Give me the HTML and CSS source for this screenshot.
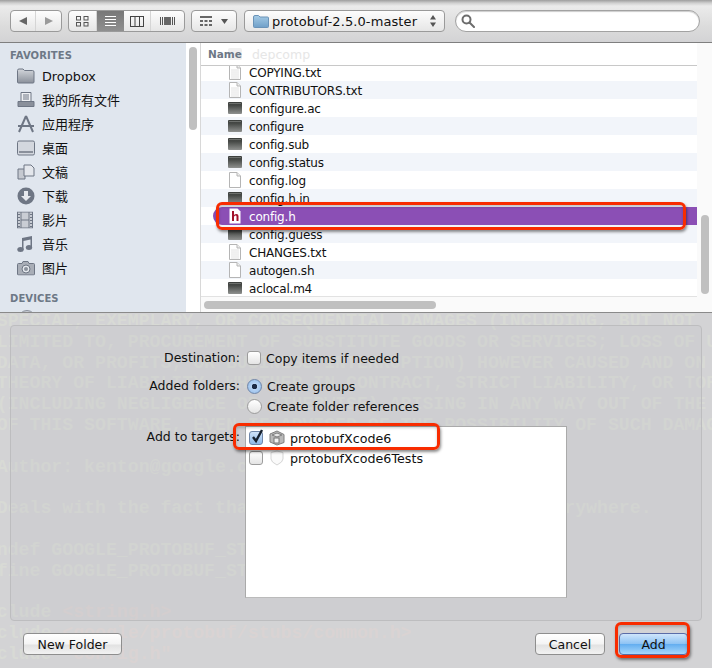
FILE: index.html
```html
<!DOCTYPE html>
<html lang="en">
<head>
<meta charset="utf-8">
<title>Add files</title>
<link rel="stylesheet" href="styles.css">
</head>
<body>
<svg class="defs" width="0" height="0" aria-hidden="true">
  <defs>
    <linearGradient id="termfill" x1="0" y1="0" x2="0" y2="1"><stop offset="0" stop-color="#3c3f3c"/><stop offset=".3" stop-color="#474a47"/><stop offset="1" stop-color="#8f918f"/></linearGradient>
    <linearGradient id="fold" x1="0" y1="0" x2="0" y2="1"><stop offset="0" stop-color="#a5cbe6"/><stop offset="1" stop-color="#6f9fc8"/></linearGradient>
    <linearGradient id="gfold" x1="0" y1="0" x2="0" y2="1"><stop offset="0" stop-color="#d3d6db"/><stop offset="1" stop-color="#8b919b"/></linearGradient>
    <symbol id="doc" viewBox="0 0 14 16"><path d="M1.500 .5h7.500l3.500 3.500v11.500h-11z" fill="#fff" stroke="#b5b5b5"/><path d="M9 .5v3.500h3.500" fill="#eee" stroke="#b5b5b5"/></symbol>
    <symbol id="doct" viewBox="0 0 14 16"><path d="M1.500 .5h7.500l3.500 3.500v11.500h-11z" fill="#fff" stroke="#b5b5b5"/><path d="M9 .5v3.500h3.500" fill="#eee" stroke="#b5b5b5"/><path d="M3 6h8M3 8h8M3 10h8M3 12h8M3 14h8" stroke="#e2e2e2"/></symbol>
    <symbol id="term" viewBox="0 0 14 12"><rect width="14" height="12" rx="1" fill="url(#termfill)"/><rect x="1" y="1" width="12" height="1" fill="#6d706d"/></symbol>
  </defs>
</svg>
<div class="sheet">
  <header class="toolbar">
    <div class="seg nav">
      <span class="cell"><svg width="10" height="10" viewBox="0 0 10 10"><path d="M9 1v8L1 5z" fill="#666"/></svg></span>
      <span class="cell"><svg width="10" height="10" viewBox="0 0 10 10"><path d="M1 1v8l8-4z" fill="#9a9a9a"/></svg></span>
    </div>
    <div class="seg views">
      <span class="cell"><svg width="13" height="11" viewBox="0 0 13 11" fill="none" stroke="#555"><rect x=".5" y=".5" width="4" height="3.500"/><rect x="8" y=".5" width="4" height="3.500"/><rect x=".5" y="6.500" width="4" height="3.500"/><rect x="8" y="6.500" width="4" height="3.500"/></svg></span>
      <span class="cell on"><svg width="13" height="11" viewBox="0 0 13 11" stroke="#fff"><path d="M1 .5h11M1 3.500h11M1 6.500h11M1 9.500h11"/></svg></span>
      <span class="cell"><svg width="14" height="11" viewBox="0 0 14 11" fill="none" stroke="#444"><rect x=".5" y=".5" width="13" height="10"/><path d="M5 .5v10M9.500 .5v10"/></svg></span>
      <span class="cell"><svg width="15" height="10" viewBox="0 0 15 10"><path d="M.5 1v8M2.500 1v8M12.500 1v8M14.500 1v8" stroke="#555"/><rect x="4" y="1" width="7" height="8" fill="#666"/></svg></span>
    </div>
    <div class="seg arrange">
      <svg width="12" height="10" viewBox="0 0 12 10" fill="#666"><path d="M0 0h12v2H0zM0 4h3v2H0zM4.500 4h3v2h-3zM9 4h3v2H9zM0 8h3v2H0zM4.500 8h3v2h-3zM9 8h3v2H9z"/></svg>
      <svg width="7" height="5" viewBox="0 0 7 5"><path d="M0 0h7L3.500 5z" fill="#555"/></svg>
    </div>
    <div class="seg path">
      <svg width="16" height="13" viewBox="0 0 16 13"><path d="M.5 2q0-1.500 1.500-1.500h3.500l1.500 1.500h7.500q1 0 1 1v8.500q0 1-1 1h-13q-1 0-1-1z" fill="url(#fold)" stroke="#6a93b8"/></svg>
      <span class="path-name">protobuf-2.5.0-master</span>
      <svg width="6" height="12" viewBox="0 0 6 12"><path d="M3 0l3 4.500H0zM3 12L0 7.500h6z" fill="#555"/></svg>
    </div>
    <div class="search">
      <svg width="14" height="14" viewBox="0 0 14 14" fill="none" stroke="#6c6c6c" stroke-width="2"><circle cx="5.500" cy="5.500" r="4"/><path d="M8.500 8.500l4.500 4.500" stroke-linecap="round"/></svg>
    </div>
  </header>

  <section class="browser">
    <nav class="sidebar">
      <h2 class="side-head">FAVORITES</h2>
      <a class="side-item"><svg width="18" height="16" viewBox="0 0 18 16"><path d="M.5 2.500q0-1.500 1.500-1.500h4l1.500 1.500h8q1.500 0 1.500 1.500v10q0 1-1 1h-14.500q-1 0-1-1z" fill="url(#gfold)" stroke="#6e7684"/></svg>Dropbox</a>
      <a class="side-item"><svg width="18" height="16" viewBox="0 0 18 16"><path d="M4 .5h10v9H4zM6 3h6M6 5h6M6 7h6" fill="#eef0f3" stroke="#6e7684"/><path d="M1 9.500h16v5H1z" fill="#8a909b" stroke="#6e7684"/></svg><span class="cjk">我的所有文件</span></a>
      <a class="side-item"><svg width="18" height="18" viewBox="0 0 18 18" fill="none" stroke="#6e7684" stroke-width="2"><path d="M9 1L2 17M9 1l7 16M1 11h16"/></svg><span class="cjk">应用程序</span></a>
      <a class="side-item"><svg width="18" height="16" viewBox="0 0 18 16"><rect x=".5" y="1" width="17" height="14" rx="1.500" fill="#d3d7de" stroke="#6e7684"/><rect x="2" y="11" width="14" height="2" fill="#8a909b"/></svg><span class="cjk">桌面</span></a>
      <a class="side-item"><svg width="18" height="16" viewBox="0 0 18 16"><path d="M1 5h7v10H1z" fill="#c5c9d0" stroke="#6e7684"/><path d="M7 1h7l3 3v8H7z" fill="#e4e7ec" stroke="#6e7684"/></svg><span class="cjk">文稿</span></a>
      <a class="side-item"><svg width="18" height="18" viewBox="0 0 18 18"><circle cx="9" cy="9" r="8.500" fill="#6e7684"/><path d="M7 4h4v5h3l-5 5-5-5h3z" fill="#e6e9ee"/></svg><span class="cjk">下载</span></a>
      <a class="side-item"><svg width="16" height="17" viewBox="0 0 16 17"><rect x=".5" y=".5" width="15" height="16" fill="#c9cdd4" stroke="#6e7684"/><path d="M4 .5v16M12 .5v16M4 8.500h8" stroke="#6e7684"/><path d="M1 3h2M1 6h2M1 9h2M1 12h2M1 15h2M13 3h2M13 6h2M13 9h2M13 12h2M13 15h2" stroke="#6e7684"/></svg><span class="cjk">影片</span></a>
      <a class="side-item"><svg width="16" height="16" viewBox="0 0 16 16" fill="#6e7684"><path d="M5 2l10-2v11h-1.500V3.500L6.500 5v9H5z"/><ellipse cx="3.500" cy="13.500" rx="3.200" ry="2.500"/><ellipse cx="12" cy="11.500" rx="3.200" ry="2.500"/></svg><span class="cjk">音乐</span></a>
      <a class="side-item"><svg width="18" height="15" viewBox="0 0 18 15"><path d="M1.500 3H5l1-2h5l1 2h4.500q1 0 1 1v9.500q0 1-1 1h-15q-1 0-1-1V4q0-1 1-1z" fill="#a9aeb7" stroke="#6e7684"/><circle cx="9" cy="8.500" r="4" fill="#e4e7ec" stroke="#6e7684"/><circle cx="9" cy="8.500" r="2" fill="#8a909b"/></svg><span class="cjk">图片</span></a>
      <h2 class="side-head devices">DEVICES</h2>
      <svg class="side-peek" width="18" height="4" viewBox="0 0 18 4"><circle cx="9" cy="9" r="8.500" fill="#c9cdd4" stroke="#8a909b"/></svg>
    </nav>
    <div class="side-scroll"><span class="thumb-v"></span></div>
    <div class="files">
      <div class="list-head"><b>Name</b><span class="ghost-name">depcomp</span></div>
      <ul class="rows">
        <li class="row first"><svg class="ic" width="14" height="16"><use href="#doct"/></svg>COPYING.txt</li>
        <li class="row"><svg class="ic" width="14" height="16"><use href="#doct"/></svg>CONTRIBUTORS.txt</li>
        <li class="row"><svg class="ic" width="14" height="12"><use href="#term"/></svg>configure.ac</li>
        <li class="row"><svg class="ic" width="14" height="12"><use href="#term"/></svg>configure</li>
        <li class="row"><svg class="ic" width="14" height="12"><use href="#term"/></svg>config.sub</li>
        <li class="row"><svg class="ic" width="14" height="12"><use href="#term"/></svg>config.status</li>
        <li class="row"><svg class="ic" width="14" height="16"><use href="#doc"/></svg>config.log</li>
        <li class="row"><svg class="ic" width="14" height="12"><use href="#term"/></svg>config.h.in</li>
        <li class="row selected"><svg class="ic" width="14" height="16" viewBox="0 0 14 16"><path d="M1.500 .5h8l3 3v12h-11z" fill="#fff"/><path d="M4 3h2v4q1-1 2.500-1 2 0 2 2v5H8.500V8.500q0-1-1-1-1.500 0-1.500 1.500v4H4z" fill="#a2132a"/></svg>config.h</li>
        <li class="row"><svg class="ic" width="14" height="12"><use href="#term"/></svg>config.guess</li>
        <li class="row"><svg class="ic" width="14" height="16"><use href="#doct"/></svg>CHANGES.txt</li>
        <li class="row"><svg class="ic" width="14" height="16"><use href="#doc"/></svg>autogen.sh</li>
        <li class="row"><svg class="ic" width="14" height="12"><use href="#term"/></svg>aclocal.m4</li>
      </ul>
      <div class="h-scroll"><span class="thumb-h"></span></div>
    </div>
    <div class="file-scroll"><span class="thumb-f"></span></div>
  </section>

  <section class="lower">
<pre class="ghost">// SPECIAL, EXEMPLARY, OR CONSEQUENTIAL DAMAGES (INCLUDING, BUT NOT
// LIMITED TO, PROCUREMENT OF SUBSTITUTE GOODS OR SERVICES; LOSS OF USE,
// DATA, OR PROFITS; OR BUSINESS INTERRUPTION) HOWEVER CAUSED AND ON ANY
// THEORY OF LIABILITY, WHETHER IN CONTRACT, STRICT LIABILITY, OR TORT
// (INCLUDING NEGLIGENCE OR OTHERWISE) ARISING IN ANY WAY OUT OF THE USE
// OF THIS SOFTWARE, EVEN IF ADVISED OF THE POSSIBILITY OF SUCH DAMAGE.

// Author: kenton@google.com (Kenton Varda)

// Deals with the fact that hash_map is not defined everywhere.

#ifndef GOOGLE_PROTOBUF_STUBS_HASH_H__
#define GOOGLE_PROTOBUF_STUBS_HASH_H__

#include <span class="inc">&lt;string.h&gt;</span>
#include <span class="inc">&lt;google/protobuf/stubs/common.h&gt;</span>
#include <span class="inc">"config.h"</span></pre>
    <div class="options">
      <div class="form">
        <span class="label">Destination:</span>
        <label class="opt"><span class="check"></span>Copy items if needed</label>
        <span class="label gap-top">Added folders:</span>
        <div class="radios">
          <label class="opt"><span class="radio on"></span>Create groups</label>
          <label class="opt"><span class="radio"></span>Create folder references</label>
        </div>
        <span class="label targets-label">Add to targets:</span>
        <div class="targets">
          <div class="target"><span class="check on"><svg width="14" height="15" viewBox="0 0 14 15"><path d="M3 8l3 4 6-11" fill="none" stroke="#16202e" stroke-width="2.400"/></svg></span>
            <svg class="t-ic" width="16" height="16" viewBox="0 0 16 16"><path d="M8 1l7 3.500v8L8 15l-7-3v-8z" fill="#b9b9b9" stroke="#808080"/><path d="M3 5l5-2 5 2-5 2z" fill="#e8e8e8" stroke="#808080"/><rect x="5" y="8" width="5" height="5" fill="#f3f3f3" stroke="#777"/></svg>
            protobufXcode6</div>
          <div class="target"><span class="check"></span>
            <svg class="t-ic" width="16" height="16" viewBox="0 0 16 16"><path d="M2 2.500L8 1l6 1.500V9q0 3-6 6-6-3-6-6z" fill="#fafafa" stroke="#d5d5d5"/></svg>
            protobufXcode6Tests</div>
        </div>
      </div>
    </div>
    <footer class="actions">
      <button class="btn folder">New Folder</button>
      <span class="spacer"></span>
      <button class="btn cancel">Cancel</button>
      <button class="btn add">Add</button>
    </footer>
  </section>
</div>
<div class="mark mark-file"></div>
<div class="mark mark-target"></div>
<div class="mark mark-add"></div>
</body>
</html>
```

FILE: styles.css
```css
* { box-sizing: border-box; }
html, body { margin: 0; padding: 0; }
body {
  width: 712px;
  height: 668px;
  overflow: hidden;
  position: relative;
  font-family: "DejaVu Sans", "Noto Sans CJK SC", sans-serif;
  font-size: 12px;
  color: #111;
  background: #d2d2d4;
}
.defs { position: absolute; }
.sheet { display: flex; flex-direction: column; height: 668px; }

/* toolbar */
.toolbar {
  height: 43px;
  flex: none;
  display: flex;
  align-items: flex-start;
  padding: 10px 12px 0 10px;
  background: linear-gradient(#9d9d9d 0, #cfcfcf 3px, #ebebeb 6px, #dcdcdc 26px, #d3d3d5 100%);
  border-bottom: 1px solid #7f7f7f;
}
.seg {
  height: 22px;
  border: 1px solid #9a9a9a;
  border-radius: 4px;
  background: linear-gradient(#fdfdfd, #e6e6e6);
  display: flex;
  align-items: center;
  margin-right: 6px;
  overflow: hidden;
}
.cell {
  height: 100%;
  display: flex;
  align-items: center;
  justify-content: center;
  border-right: 1px solid #d5d5d5;
}
.cell:last-child { border-right: 0; }
.nav { width: 52px; }
.nav .cell { flex: 1; }
.views { width: 118px; }
.views .cell { width: 27px; flex: none; }
.views .cell:first-child { width: 28px; }
.views .cell:last-child { width: auto; flex: 1; }
.views .cell.on { background: linear-gradient(#787878, #8f8f8f); border-right: 0; }
.arrange { width: 46px; justify-content: center; gap: 9px; margin-right: 6px; }
.path { width: 202px; padding: 0 8px 0 8px; margin-left: 1px; margin-right: 10px; gap: 3px; }
.path-name { flex: 1; font-size: 13px; white-space: nowrap; letter-spacing: .1px; }
.search {
  width: 246px;
  height: 22px;
  border: 1px solid #a2a2a2;
  border-radius: 11px;
  background: #fff;
  display: flex;
  align-items: center;
  padding-left: 5px;
  box-shadow: inset 0 1px 1px #ccc;
}

/* browser */
.browser { height: 269px; flex: none; display: flex; background: #fff; }
.sidebar {
  width: 186px;
  flex: none;
  background: #e0e6ee;
  overflow: hidden;
  padding: 0 0 0 10px;
}
.side-head {
  margin: 5px 0 0;
  height: 16px;
  line-height: 16px;
  font-size: 10px;
  font-weight: bold;
  color: #6d7886;
  letter-spacing: .1px;
}
.side-head.devices { margin-top: 11px; }
.side-peek { display: block; margin: 3px 0 0 8px; }
.side-item {
  height: 24px;
  display: flex;
  align-items: center;
  position: relative;
  padding-left: 32px;
  font-size: 12.800px;
}
.side-item svg { position: absolute; left: 7px; top: 50%; transform: translateY(-50%); }
.cjk { font-family: "Noto Sans CJK SC", sans-serif; font-size: 13px; margin-bottom: 2px; }
.side-scroll { width: 14px; flex: none; background: #fff; padding: 4px 0 0 3px; }
.thumb-v { display: block; width: 8px; height: 83px; border-radius: 4px; background: #c0c0c0; }
.files { width: 497px; flex: none; display: flex; flex-direction: column; border-left: 1px solid #d8d8d8; }
.list-head {
  height: 23px;
  flex: none;
  display: flex;
  align-items: center;
  padding-left: 7px;
  border-bottom: 1px solid #c8c8c8;
  background: #fff;
  position: relative;
  z-index: 1;
}
.list-head::before {
  content: "";
  position: absolute;
  left: 27px;
  top: 5px;
  width: 14px;
  height: 12px;
  border-radius: 2px;
  background: #f0f0f0;
  z-index: -1;
}
.list-head b { font-size: 10.500px; color: #6d7886; }
.ghost-name { margin-left: 10px; color: #e6e6e6; font-size: 12.500px; }
.rows {
  list-style: none;
  margin: 0;
  padding: 0;
  height: 231px;
  flex: none;
  overflow: hidden;
  border-bottom: 1px solid #e2e2e2;
}
.row {
  height: 18px;
  display: flex;
  align-items: center;
  padding: 2px 0 0 27px;
  position: relative;
  font-size: 12px;
  letter-spacing: -.2px;
  white-space: nowrap;
}
.row:nth-child(even) { background: #f2f5fa; }
.row.first { margin-top: -3px; }
.ic { margin: -2px 7px 0 0; flex: none; }
.row.selected {
  margin-left: 12px;
  padding-left: 15px;
  background: #8b4fb5;
  color: #fff;
  border-radius: 9px 0 0 9px;
}
.h-scroll { height: 15px; flex: none; padding: 4px 0 0 3px; background: #fafafa; }
.thumb-h { display: block; width: 232px; height: 8px; border-radius: 4px; background: #c0c0c0; }
.file-scroll { flex: 1; background: #fafafa; padding: 172px 0 0 4px; }
.thumb-f { display: block; width: 8px; height: 79px; border-radius: 4px; background: #c0c0c0; }

/* lower pane */
.lower {
  position: relative;
  flex: 1;
  overflow: hidden;
  border-top: 1px solid #8a8a8a;
  background: #d3d3d5;
  display: flex;
  flex-direction: column;
}
.ghost {
  position: absolute;
  left: -36px;
  top: -2px;
  margin: 0;
  font-family: "Liberation Mono", monospace;
  font-weight: bold;
  font-size: 18.200px;
  line-height: 20.800px;
  color: #d8dad5;
  white-space: pre;
}
.inc { color: #dad3d3; }
.options {
  position: relative;
  margin: 12px 10px 0 10px;
  height: 296px;
  flex: none;
  border: 1px solid #bdbdbf;
  border-radius: 4px;
  background: rgba(190, 190, 194, .22);
}
.form {
  display: grid;
  grid-template-columns: 229px 1fr;
  column-gap: 5px;
  padding-top: 24px;
}
.label { text-align: right; line-height: 16px; font-size: 12.500px; }
.gap-top { margin-top: 12px; }
.opt {
  display: flex;
  align-items: center;
  height: 16px;
  font-size: 12.500px;
  gap: 5px;
  margin-left: 2px;
}
.radios { display: flex; flex-direction: column; gap: 4px; margin-top: 12px; }
.check {
  width: 14px;
  height: 14px;
  border: 1px solid #9c9c9c;
  border-radius: 3px;
  background: linear-gradient(#fff, #e4e4e4);
  flex: none;
  position: relative;
}
.check.on { background: linear-gradient(#cfe2f8, #8db8e8); border-color: #6f86a8; }
.check svg { position: absolute; left: 0; top: -3px; }
.radio {
  width: 15px;
  height: 15px;
  border: 1px solid #9c9c9c;
  border-radius: 50%;
  background: linear-gradient(#fff, #e4e4e4);
  flex: none;
  position: relative;
}
.radio.on { background: radial-gradient(circle, #1c2a44 0 2.500px, #b7d3f3 3px, #8db8e8 100%); border-color: #6f86a8; }
.targets-label { margin-top: 15px; }
.targets {
  margin: 12px 0 0 0;
  width: 322px;
  height: 172px;
  background: #fff;
  border: 1px solid #aaa;
  border-bottom-color: #bbb;
  padding-top: 1px;
}
.target {
  height: 20px;
  display: flex;
  align-items: center;
  padding-left: 3px;
  font-size: 12.700px;
}
.t-ic { margin: 0 5px 0 6px; flex: none; }
.actions {
  position: relative;
  display: flex;
  align-items: flex-start;
  padding: 12px 24px 0 23px;
}
.spacer { flex: 1; }
.btn {
  height: 22px;
  font: 12.500px "DejaVu Sans", sans-serif;
  color: #111;
  border: 1px solid #8e8e8e;
  border-radius: 4px;
  background: linear-gradient(#fff, #f4f4f4 50%, #e2e2e2 55%, #f2f2f2);
  padding: 0;
}
.folder { width: 99px; }
.cancel { width: 70px; margin-right: 14px; }
.add {
  width: 69px;
  border-color: #5a6ca8;
  background: linear-gradient(#cfe5fb, #8fc4f4 48%, #64aef0 52%, #a8d8fb);
}

/* annotation frames */
.mark {
  position: absolute;
  border: 3px solid #f82c00;
  border-radius: 6px;
  box-shadow: 1px 2px 3px rgba(0, 0, 0, .45), inset 0 2px 3px rgba(0, 0, 0, .2);
}
.mark-file { left: 216px; top: 202px; width: 470px; height: 28px; }
.mark-target { left: 233px; top: 423px; width: 207px; height: 27px; }
.mark-add { left: 615px; top: 622px; width: 75px; height: 36px; }
```
